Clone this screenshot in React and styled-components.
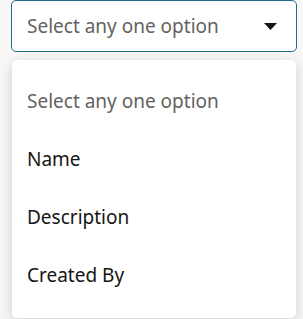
import React from "react";
import styled, { createGlobalStyle } from "styled-components";

const Global = createGlobalStyle`
  html, body {
    margin: 0;
    padding: 0;
    background: #f8f7f5;
    font-family: "Noto Sans", "Open Sans", sans-serif;
  }
`;

const Wrap = styled.div`
  width: 303px;
  height: 319px;
  overflow: hidden;
  padding-left: 11px;
  box-sizing: border-box;
`;

const Select = styled.div`
  width: 286px;
  height: 52px;
  box-sizing: border-box;
  border: 1px solid #1f6d8b;
  border-radius: 5px;
  background: #ffffff;
  display: flex;
  align-items: center;
  justify-content: space-between;
  padding: 0 19px 0 15px;
`;

const Placeholder = styled.span`
  font-size: 19px;
  color: ${(p) => (p.$muted ? "#65615d" : "#161513")};
`;

const Caret = styled.svg`
  width: 13px;
  height: 7px;
  display: block;
`;

const Panel = styled.div`
  margin: 8px 0 0 1px;
  width: 284px;
  height: 258px;
  box-sizing: border-box;
  background: #ffffff;
  border-radius: 5px;
  box-shadow: 0 4px 14px rgba(0, 0, 0, 0.16);
  padding-top: 12px;
  display: flex;
  flex-direction: column;
`;

const Item = styled.div`
  height: 58px;
  display: flex;
  align-items: center;
  padding-left: 15px;
  font-size: 19px;
  color: ${(p) => (p.$muted ? "#65615d" : "#161513")};
`;

export default function App() {
  return (
    <>
      <Global />
      <Wrap>
        <Select>
          <Placeholder $muted>Select any one option</Placeholder>
          <Caret viewBox="0 0 13 7">
            <path d="M0 0 H13 L6.5 7 Z" fill="#161513" />
          </Caret>
        </Select>
        <Panel>
          <Item $muted>Select any one option</Item>
          <Item>Name</Item>
          <Item>Description</Item>
          <Item>Created By</Item>
        </Panel>
      </Wrap>
    </>
  );
}
